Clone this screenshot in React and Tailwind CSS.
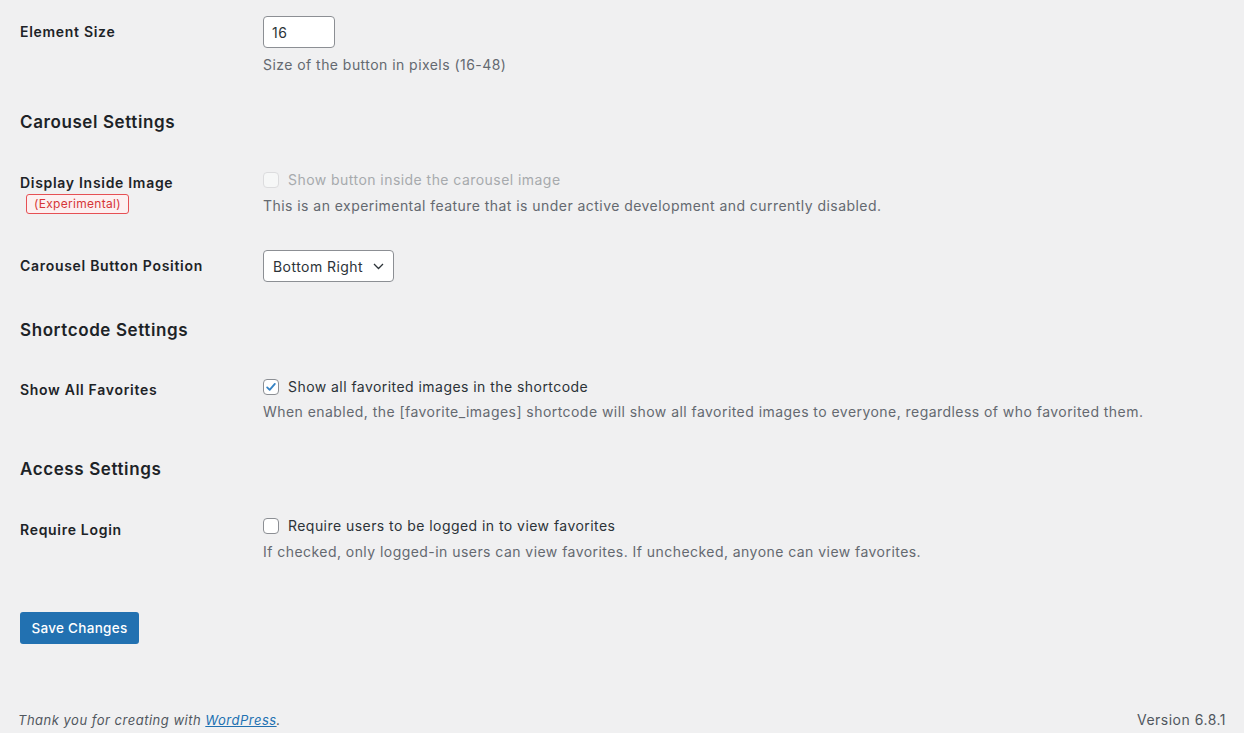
import { useState } from 'react';

const Checkbox = ({ checked, disabled, onChange }) => (
  <button
    type="button"
    disabled={disabled}
    onClick={onChange}
    className={`w-[16px] h-[16px] shrink-0 rounded-[4px] border flex items-center justify-center ${
      disabled ? 'border-[#dcdcde] bg-[#f6f7f7]' : 'border-[#8c8f94] bg-white'
    }`}
  >
    {checked && (
      <svg width="14" height="14" viewBox="0 0 20 20" fill="none">
        <path d="M4.5 10.5l3.6 3.6 7.4-8.6" stroke="#3582c4" strokeWidth="2.6" strokeLinecap="round" strokeLinejoin="round" />
      </svg>
    )}
  </button>
);

const App = () => {
  const [size, setSize] = useState('16');
  const [position, setPosition] = useState('Bottom Right');
  const [showAll, setShowAll] = useState(true);
  const [requireLogin, setRequireLogin] = useState(false);

  return (
    <div
      className="min-h-[733px] bg-[#f0f0f1] text-[#1d2327] text-[14px] tracking-[0.45px] pl-[20px] pr-[18px]"
      style={{ fontFamily: 'Inter, "Liberation Sans", sans-serif' }}
    >
      {/* Element size */}
      <div className="flex items-start pb-[15px]">
        <div className="w-[243px] shrink-0 pt-[22px] leading-[20px] font-semibold tracking-[0.7px]">Element Size</div>
        <div className="pt-[16px]">
          <input
            type="text"
            value={size}
            onChange={(e) => setSize(e.target.value)}
            className="w-[72px] h-[32px] px-[8px] border border-[#8c8f94] rounded-[4px] bg-white text-[14px] text-[#2c3338] outline-none"
          />
          <p className="mt-[7px] leading-[20px] text-[#646970]">Size of the button in pixels (16-48)</p>
        </div>
      </div>

      <h2 className="mt-[21px] text-[17px] leading-[22px] font-semibold tracking-[0.6px]">Carousel Settings</h2>

      <div className="flex items-start mt-[20px] pb-[15px]">
        <div className="w-[243px] shrink-0 pt-[20px] leading-[20px] font-semibold tracking-[0.7px]">
          <div>Display Inside Image</div>
          <span className="inline-flex items-center mt-[1px] ml-[6px] h-[20px] px-[7px] rounded-[3px] border border-[#e65054] bg-[#fcf0f1] text-[#d63638] text-[12px] font-normal tracking-[0.3px]">
            (Experimental)
          </span>
        </div>
        <div className="pt-[17px]">
          <label className="flex items-center gap-[9px] leading-[20px] text-[#a7aaad]">
            <Checkbox disabled />
            Show button inside the carousel image
          </label>
          <p className="mt-[6px] leading-[20px] text-[#646970]">
            This is an experimental feature that is under active development and currently disabled.
          </p>
        </div>
      </div>

      <div className="flex items-start pb-[15px]">
        <div className="w-[243px] shrink-0 pt-[25px] leading-[20px] font-semibold tracking-[0.7px]">Carousel Button Position</div>
        <div className="pt-[19px]">
          <div className="relative w-[131px] h-[32px]">
            <select
              value={position}
              onChange={(e) => setPosition(e.target.value)}
              className="appearance-none w-full h-full pl-[9px] pr-[24px] border border-[#8c8f94] rounded-[4px] bg-white text-[14px] tracking-[0.45px] text-[#2c3338] outline-none"
            >
              <option>Top Left</option>
              <option>Top Right</option>
              <option>Bottom Left</option>
              <option>Bottom Right</option>
            </select>
            <svg className="absolute right-[10px] top-[13px] pointer-events-none" width="11" height="7" viewBox="0 0 11 7" fill="none">
              <path d="M1 1l4.5 4.5L10 1" stroke="#2c3338" strokeWidth="1.3" />
            </svg>
          </div>
        </div>
      </div>

      <h2 className="mt-[22px] text-[17px] leading-[22px] font-semibold tracking-[0.6px]">Shortcode Settings</h2>

      <div className="flex items-start mt-[20px] pb-[15px]">
        <div className="w-[243px] shrink-0 pt-[19px] leading-[20px] font-semibold tracking-[0.7px]">Show All Favorites</div>
        <div className="pt-[16px]">
          <label className="flex items-center gap-[9px] leading-[20px] text-[#2c3338]">
            <Checkbox checked={showAll} onChange={() => setShowAll(!showAll)} />
            Show all favorited images in the shortcode
          </label>
          <p className="mt-[5px] leading-[20px] text-[#646970]">
            When enabled, the [favorite_images] shortcode will show all favorited images to everyone, regardless of who favorited them.
          </p>
        </div>
      </div>

      <h2 className="mt-[21px] text-[17px] leading-[22px] font-semibold tracking-[0.6px]">Access Settings</h2>

      <div className="flex items-start mt-[20px] pb-[15px]">
        <div className="w-[243px] shrink-0 pt-[20px] leading-[20px] font-semibold tracking-[0.7px]">Require Login</div>
        <div className="pt-[16px]">
          <label className="flex items-center gap-[9px] leading-[20px] text-[#2c3338]">
            <Checkbox checked={requireLogin} onChange={() => setRequireLogin(!requireLogin)} />
            Require users to be logged in to view favorites
          </label>
          <p className="mt-[6px] leading-[20px] text-[#646970]">
            If checked, only logged-in users can view favorites. If unchecked, anyone can view favorites.
          </p>
        </div>
      </div>

      <button
        type="button"
        className="mt-[35px] w-[119px] h-[32px] rounded-[3px] bg-[#2271b1] text-white text-[13.5px] font-medium tracking-[0.3px]"
      >
        Save Changes
      </button>

      <div className="mt-[67px] -ml-[2px] flex justify-between items-center leading-[18px] text-[13px] tracking-[0.5px] text-[#50575e] pb-[4px]">
        <p className="italic">
          Thank you for creating with <a href="#" className="text-[#2271b1] underline">WordPress</a>.
        </p>
        <p className="text-[14px]">Version 6.8.1</p>
      </div>
    </div>
  );
};

export default App;
